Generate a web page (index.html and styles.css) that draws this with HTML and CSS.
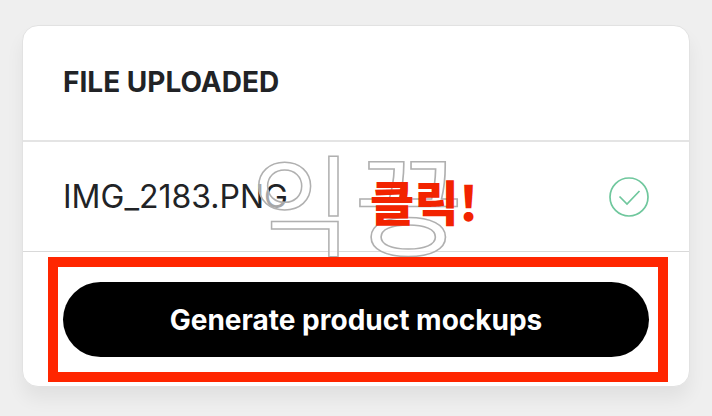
FILE: index.html
```html
<!DOCTYPE html>
<html lang="ko">
<head>
<meta charset="utf-8">
<title>File uploaded</title>
<link rel="stylesheet" href="styles.css">
</head>
<body>
<main class="card">
  <header class="card-header"><h1 class="title">FILE UPLOADED</h1></header>
  <div class="file-row">
    <span class="file-name">IMG_2183.PNG</span>
    <svg class="check" viewBox="0 0 40 40" width="40" height="40" aria-hidden="true">
      <circle cx="20" cy="20" r="19" fill="none" stroke="#6fc79d" stroke-width="1.7"/>
      <path d="M10.5 19.5 L18 27 L30.5 14" fill="none" stroke="#6fc79d" stroke-width="1.7"/>
    </svg>
  </div>
  <div class="card-footer">
    <button class="generate">Generate product mockups</button>
  </div>
  <div class="watermark"><span class="wm-first">익</span><span class="wm-second">끙</span></div>
  <div class="click-note">클릭!</div>
  <div class="highlight"></div>
</main>
</body>
</html>
```

FILE: styles.css
```css
* { box-sizing: border-box; }
html, body { margin: 0; height: 100%; }
body {
  width: 712px;
  height: 416px;
  overflow: hidden;
  background: #efefef;
  padding: 25px 22px 29px;
  font-family: Inter, "Noto Sans CJK KR", sans-serif;
}
.card {
  position: relative;
  width: 668px;
  height: 362px;
  background: #fff;
  border: 1px solid #e2e2e2;
  border-radius: 16px;
  box-shadow: 0 12px 18px rgba(0,0,0,0.06);
  display: flex;
  flex-direction: column;
}
.card-header {
  height: 116px;
  border-bottom: 2px solid #e4e4e4;
  padding: 0 40px 2px;
  display: flex;
  align-items: center;
}
.title {
  margin: 0;
  font-size: 28px;
  font-weight: 700;
  color: #212326;
}
.file-row {
  height: 110px;
  border-bottom: 1px solid #d9d9d9;
  padding: 0 40px;
  display: flex;
  align-items: center;
  justify-content: space-between;
}
.file-name {
  font-size: 32px;
  font-weight: 400;
  color: #212326;
}
.card-footer {
  flex: 1;
  padding: 30px 40px 0;
}
.generate {
  display: block;
  width: 586px;
  height: 75px;
  border: 0;
  border-radius: 38px;
  background: #000;
  color: #fff;
  font-family: inherit;
  font-size: 28px;
  font-weight: 700;
}
.watermark {
  position: absolute;
  left: 228px;
  top: 110px;
  display: flex;
  font-family: "Noto Sans CJK KR", sans-serif;
  font-size: 110px;
  font-weight: 400;
  line-height: 128px;
  color: rgba(255,255,255,0.6);
  -webkit-text-stroke: 1.5px #b0b0b0;
}
.wm-second {
  margin-left: 6px;
  transform: scaleX(1.08);
}
.click-note {
  position: absolute;
  left: 347px;
  top: 144px;
  font-family: "Noto Sans CJK KR", sans-serif;
  font-size: 48px;
  font-weight: 900;
  line-height: 60px;
  letter-spacing: 0.3px;
  color: #f22300;
}
.highlight {
  position: absolute;
  left: 25px;
  top: 231px;
  width: 620px;
  height: 125px;
  border: 10px solid #ff2600;
}
```
